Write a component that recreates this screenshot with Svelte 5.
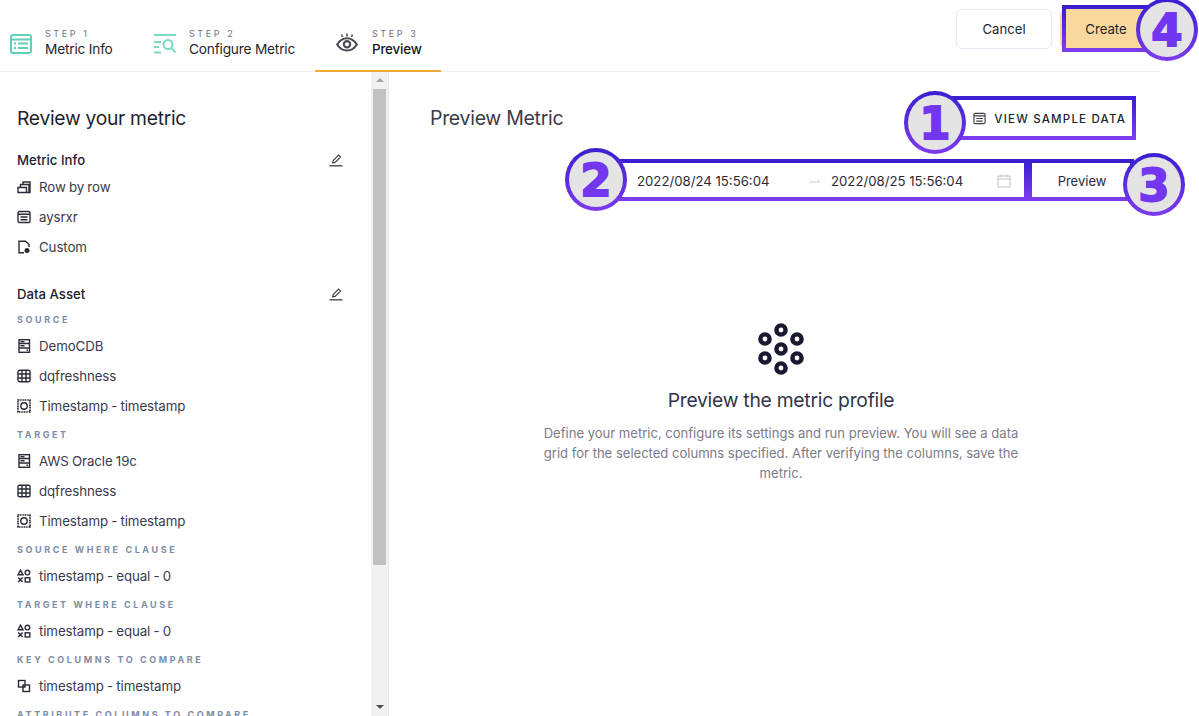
<script>
  const metricInfo = [
    { icon: 'rows', text: 'Row by row' },
    { icon: 'table', text: 'aysrxr' },
    { icon: 'file', text: 'Custom' }
  ];
  const groups = [
    { label: 'SOURCE', rows: [{ icon: 'db', text: 'DemoCDB' }, { icon: 'grid', text: 'dqfreshness' }, { icon: 'col', text: 'Timestamp - timestamp' }] },
    { label: 'TARGET', rows: [{ icon: 'db', text: 'AWS Oracle 19c' }, { icon: 'grid', text: 'dqfreshness' }, { icon: 'col', text: 'Timestamp - timestamp' }] },
    { label: 'SOURCE WHERE CLAUSE', rows: [{ icon: 'shapes', text: 'timestamp - equal - 0' }] },
    { label: 'TARGET WHERE CLAUSE', rows: [{ icon: 'shapes', text: 'timestamp - equal - 0' }] },
    { label: 'KEY COLUMNS TO COMPARE', rows: [{ icon: 'overlap', text: 'timestamp - timestamp' }] },
    { label: 'ATTRIBUTE COLUMNS TO COMPARE', rows: [] }
  ];
  const dots = [[24,5],[8,14],[40,14],[24,24],[8,33],[40,33],[24,43]];
</script>

{#snippet glyph(name)}
  <svg class="glyph" viewBox="0 0 14 14" fill="none" stroke="currentColor" stroke-width="1.4">
    {#if name === 'rows'}
      <path d="M1 7.500h8.500v5H1zM3.500 7.500V4.500h8.500v8H9.500M6 4.500V2h7v10.500h-1" />
    {:else if name === 'table'}
      <rect x="1" y="1.500" width="12" height="11" rx="1.500" /><path d="M1 4.200h12M3.500 7h7M3.500 9.800h7" />
    {:else if name === 'file'}
      <path d="M7 12.800H2V1.200h6.500L12 4.500v2.500" /><circle cx="10" cy="10.500" r="2.500" fill="currentColor" stroke="none" />
    {:else if name === 'db'}
      <rect x="2" y="0.700" width="10.500" height="12.600" /><path d="M2 4.500h10.500M2 9h10.500M3.500 2.600h4M3.500 6.700h4M9.500 11.200h1.500" />
    {:else if name === 'grid'}
      <rect x="1" y="1.200" width="12" height="11.600" rx="1.500" /><path d="M1 5h12M1 9h12M5 1.200v11.600M9 1.200v11.600" />
    {:else if name === 'col'}
      <rect x="1" y="1" width="12" height="12" stroke-dasharray="1.200 .5" stroke-width="1.700" /><circle cx="7" cy="7" r="3.200" />
    {:else if name === 'shapes'}
      <path d="M3.500 1.200 6 5.800H1zM1.200 8.600l4.400 4.400M5.600 8.600 1.200 13" /><circle cx="10.400" cy="3.600" r="2.300" /><rect x="8.200" y="8.800" width="4.600" height="4.200" />
    {:else if name === 'overlap'}
      <rect x="1.500" y="1.500" width="6.500" height="6.500" /><rect x="6" y="6" width="6.500" height="6.500" />
    {/if}
  </svg>
{/snippet}

{#snippet pencil()}
  <svg class="pencil" viewBox="0 0 14 14" fill="none" stroke="currentColor" stroke-width="1.100">
    <path d="M3.600 9.800 4.200 7.500 9.600 2l2 2-5.500 5.400z" /><path d="M0.500 12.800h13" stroke-width="1.300" />
  </svg>
{/snippet}

<div class="page">
  <header class="top">
    <nav class="tabs">
      <div class="tab one">
        <svg class="step-icon" viewBox="0 0 22 20" fill="none" stroke="#5fd0b5" stroke-width="2">
          <rect x="1" y="1" width="20" height="18" rx="2" /><path d="M1 5.500h20M4 9.500h2M8 9.500h10M4 14h2M8 14h10" />
        </svg>
        <div class="tab-text"><span class="step">STEP 1</span><span class="name">Metric Info</span></div>
      </div>
      <div class="tab two">
        <svg class="step-icon" viewBox="0 0 22 20" fill="none" stroke="#7bdac4" stroke-width="2">
          <path d="M0 1h22M0 8h7M0 13h5M0 18.500h7" /><circle cx="14" cy="10.500" r="4.500" /><path d="m17.500 14 4 4.500" />
        </svg>
        <div class="tab-text"><span class="step">STEP 2</span><span class="name">Configure Metric</span></div>
      </div>
      <div class="tab three active">
        <svg class="step-icon eye" viewBox="0 0 22 20" fill="none" stroke="#4a4a55" stroke-width="2.100">
          <path d="M1.200 12.500C4 8 7 6.300 11 6.300s7 1.700 9.800 6.200c-2.800 4.500-5.800 6-9.800 6s-7-1.500-9.800-6z" /><circle cx="11" cy="12.300" r="3.200" /><path d="M11 1.500v3M5.500 2.500l1 2.500M16.500 2.500l-1 2.500" stroke-width="1.500" />
        </svg>
        <div class="tab-text"><span class="step">STEP 3</span><span class="name strong">Preview</span></div>
      </div>
    </nav>
    <div class="actions">
      <button class="btn cancel">Cancel</button>
      <button class="btn create">Create</button>
    </div>
  </header>

  <div class="body">
    <aside class="side">
      <div class="side-scroll">
        <h2>Review your metric</h2>
        <div class="sec-head first"><span>Metric Info</span>{@render pencil()}</div>
        {#each metricInfo as r}
          <div class="row">{@render glyph(r.icon)}<span>{r.text}</span></div>
        {/each}
        <div class="sec-head second"><span>Data Asset</span>{@render pencil()}</div>
        {#each groups as g}
          <div class="label">{g.label}</div>
          {#each g.rows as r}
            <div class="row">{@render glyph(r.icon)}<span>{r.text}</span></div>
          {/each}
        {/each}
      </div>
      <div class="bar">
        <span class="arrow up"></span>
        <div class="thumb"></div>
        <span class="arrow down"></span>
      </div>
    </aside>

    <main class="panel">
      <div class="title-row">
        <h1>Preview Metric</h1>
        <button class="sample">
          <svg class="sample-icon" viewBox="0 0 14 14" fill="none" stroke="#3c3c48" stroke-width="1.200">
            <rect x="1" y="1.500" width="12" height="11" rx="1.500" /><path d="M1 4.200h12M3.500 7h7M3.500 9.800h7" />
          </svg>
          VIEW SAMPLE DATA
        </button>
      </div>
      <div class="range-row">
        <div class="range">
          <span class="date">2022/08/24 15:56:04</span>
          <svg class="sep" viewBox="0 0 12 8" fill="none" stroke="#cfcfcf"><path d="M0 5h11L8 2.500" /></svg>
          <span class="date">2022/08/25 15:56:04</span>
          <svg class="cal" viewBox="0 0 14 14" fill="none" stroke="#c4c4c4"><rect x="1" y="2" width="12" height="11" /><path d="M1 5h12M4 .500v3M10 .500v3" /></svg>
        </div>
        <button class="preview">Preview</button>
      </div>
      <div class="empty">
        <svg class="dots" viewBox="0 0 48 48">
          {#each dots as d}
            <circle cx={d[0]} cy={d[1]} r="4.600" fill="none" stroke="#191a32" stroke-width="4.400" />
          {/each}
        </svg>
        <h3>Preview the metric profile</h3>
        <p>Define your metric, configure its settings and run preview. You will see a data grid for the selected columns specified. After verifying the columns, save the metric.</p>
      </div>
    </main>
  </div>

  <div class="box b1"></div>
  <div class="box b2"></div>
  <div class="box b3"></div>
  <div class="box b4"></div>
  <div class="mark m1"><span>1</span></div>
  <div class="mark m2"><span>2</span></div>
  <div class="mark m3"><span>3</span></div>
  <div class="mark m4"><span>4</span></div>
</div>

<style>
  :global(body) { margin: 0; background: #fff; }
  .page {
    position: relative;
    width: 1199px;
    height: 716px;
    overflow: hidden;
    font-family: Inter, "Liberation Sans", sans-serif;
    font-size: 13px;
    color: #1f1f2e;
  }
  .top {
    width: 1160px;
    height: 72px;
    box-sizing: border-box;
    border-bottom: 1px solid #eceef2;
    display: flex;
    justify-content: space-between;
  }
  .tabs { display: flex; height: 72px; }
  .tab { display: flex; align-items: flex-start; box-sizing: border-box; height: 72px; padding-top: 27px; }
  .one { width: 132px; padding-left: 10px; gap: 13px; }
  .two { width: 183px; padding-left: 22px; gap: 13px; }
  .three { width: 126px; padding-left: 21px; gap: 14px; border-bottom: 2px solid #f3a93c; }
  .step-icon { width: 22px; height: 20px; margin-top: 7px; flex: none; }
  .eye { margin-top: 5px; }
  .tab-text { display: flex; flex-direction: column; }
  .step { font-size: 9px; letter-spacing: 2.600px; line-height: 13px; color: #6f7085; }
  .name { font-size: 13.700px; line-height: 18px; letter-spacing: -0.200px; white-space: nowrap; }
  .strong { font-weight: 500; font-size: 13.400px; color: #15151f; }
  .actions { display: flex; gap: 8px; padding: 9px 4px 0 0; }
  .btn {
    width: 96px;
    height: 40px;
    font: inherit;
    font-size: 13.200px;
    border-radius: 6px;
    color: #1f1f2e;
    padding: 0;
  }
  .cancel { background: #fff; border: 1px solid #e2e6f0; }
  .create { background: #f8d89c; border: 0; padding-right: 4px; }

  .body { display: flex; height: 644px; }
  .side {
    width: 389px;
    flex: none;
    display: flex;
    box-sizing: border-box;
    border-right: 1px solid #e2e6f0;
    overflow: hidden;
  }
  .side-scroll { width: 371px; box-sizing: border-box; padding: 32px 28px 0 17px; flex: none; }
  h2 { margin: 0; font-size: 19.300px; font-weight: 400; line-height: 28px; letter-spacing: -0.300px; color: #1f1f2e; }
  .sec-head {
    display: flex;
    justify-content: space-between;
    align-items: center;
    height: 24px;
    font-size: 13.200px;
    font-weight: 500;
    color: #22222f;
  }
  .first { margin-top: 16px; }
  .second { margin-top: 20px; }
  .pencil { width: 14px; height: 14px; color: #3c3c48; }
  .row {
    height: 30px;
    display: flex;
    align-items: center;
    gap: 8px;
    font-size: 13.300px;
    color: #3a3a4e;
    letter-spacing: -0.100px;
    word-spacing: -0.400px;
    white-space: nowrap;
  }
  .glyph { width: 14px; height: 14px; flex: none; color: #2b2b37; }
  .label {
    height: 14px;
    margin: 7px 0 4px;
    font-size: 9px;
    line-height: 14px;
    font-weight: 700;
    letter-spacing: 2.600px;
    color: #7d8ca6;
    white-space: nowrap;
  }
  .bar {
    width: 17px;
    background: #f1f1f1;
    flex: none;
    display: flex;
    flex-direction: column;
    align-items: center;
  }
  .thumb { width: 13px; height: 476px; background: #c1c1c1; margin-top: 7px; }
  .arrow { width: 0; height: 0; border-left: 4px solid transparent; border-right: 4px solid transparent; }
  .up { border-bottom: 4px solid #a3a3a3; margin-top: 6px; }
  .down { border-top: 4px solid #505050; margin-top: 140px; }

  .panel { width: 784px; flex: none; box-sizing: border-box; padding: 26px 41px 0; }
  .title-row { display: flex; justify-content: space-between; align-items: center; height: 40px; }
  h1 { margin: 0; font-size: 19.500px; font-weight: 400; letter-spacing: -0.300px; color: #3b3b4a; }
  .sample {
    display: flex;
    align-items: center;
    gap: 8px;
    border: 0;
    background: none;
    padding: 1px 6px 0 0;
    font: inherit;
    font-size: 11.500px;
    font-weight: 500;
    letter-spacing: 1.200px;
    color: #1f1f2e;
  }
  .sample-icon { width: 13px; height: 13px; margin-top: -1px; }
  .range-row { display: flex; justify-content: flex-end; gap: 8px; margin-top: 25px; height: 34px; }
  .range { width: 405px; box-sizing: border-box; display: flex; align-items: center; padding: 1px 13px 0 18px; }
  .date { font-size: 13.200px; color: #2a2a36; white-space: nowrap; width: 133px; }
  .sep { width: 12px; height: 8px; margin: 0 10px 0 39px; }
  .cal { width: 14px; height: 14px; margin-left: auto; }
  .preview { width: 100px; border: 0; background: #fff; font: inherit; font-size: 13px; color: #2a2a36; padding: 1px 0 0 0; }
  .empty { display: flex; flex-direction: column; align-items: center; margin-top: 128px; }
  .dots { width: 48px; height: 48px; overflow: visible; }
  h3 { margin: 15px 0 0; font-size: 19.300px; line-height: 24px; font-weight: 400; letter-spacing: -0.250px; color: #33334a; }
  p { margin: 11px 0 0; width: 490px; font-size: 13.050px; line-height: 20px; text-align: center; color: #7b7b8a; }

  .box {
    position: absolute;
    box-sizing: border-box;
    border: 4px solid;
    border-image: linear-gradient(#3a1fd0, #7c3aed) 1;
  }
  .b1 { left: 950px; top: 96px; width: 186px; height: 44px; }
  .b2 { left: 615px; top: 159px; width: 413px; height: 42px; }
  .b3 { left: 1028px; top: 159px; width: 106px; height: 42px; }
  .b4 { left: 1062px; top: 5px; width: 90px; height: 47px; }
  .mark {
    position: absolute;
    box-sizing: border-box;
    width: 62px;
    height: 63px;
    padding-top: 1px;
    border-radius: 50%;
    border: 4px solid transparent;
    background: linear-gradient(#e4e4e4, #e4e4e4) padding-box, linear-gradient(#3a1fd0, #7c3aed) border-box;
    display: flex;
    align-items: center;
    justify-content: center;
  }
  .mark span {
    font-family: "DejaVu Sans", sans-serif;
    font-weight: 700;
    font-size: 45px;
    line-height: 1;
    color: #7136ee;
    -webkit-text-stroke: 1.800px #7136ee;
  }
  .m1 { left: 904px; top: 91px; }
  .m2 { left: 565px; top: 148px; }
  .m3 { left: 1123px; top: 153px; }
  .m4 { left: 1136px; top: -2px; }
</style>
